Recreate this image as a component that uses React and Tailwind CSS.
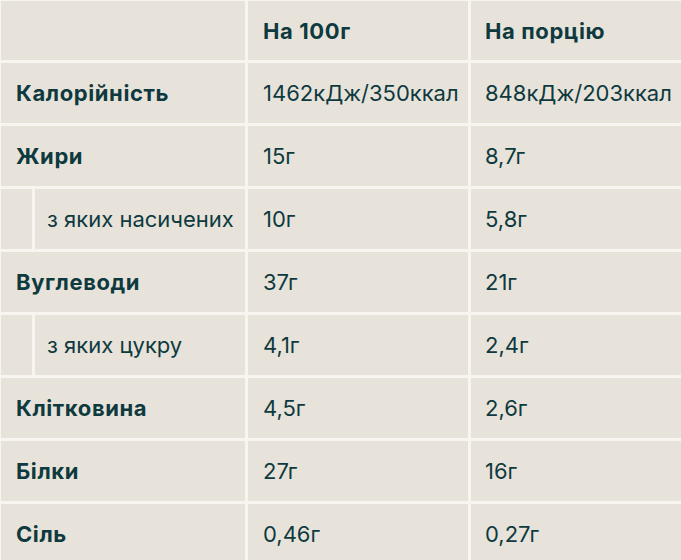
import React from "react";

const rows = [
  { label: "Калорійність", a: "1462кДж/350ккал", b: "848кДж/203ккал" },
  { label: "Жири", a: "15г", b: "8,7г" },
  { label: "з яких насичених", a: "10г", b: "5,8г", sub: true },
  { label: "Вуглеводи", a: "37г", b: "21г" },
  { label: "з яких цукру", a: "4,1г", b: "2,4г", sub: true },
  { label: "Клітковина", a: "4,5г", b: "2,6г" },
  { label: "Білки", a: "27г", b: "16г" },
  { label: "Сіль", a: "0,46г", b: "0,27г" },
];

export default function App() {
  return (
    <div
      className="w-[681px] h-[560px] overflow-hidden bg-[#f8f5f0] pl-[1px] pt-[1px] text-[#0e3a3f]"
      style={{ fontFamily: "Inter, 'Noto Sans', sans-serif" }}
    >
      <div className="grid grid-cols-[244px_220px_230px] gap-[3px] text-[22px] leading-none">
        <div className="h-[59px] bg-[#e8e3da]" />
        <div className="h-[59px] bg-[#e8e3da] flex items-center pl-[15px] font-bold tracking-[0.6px]">На 100г</div>
        <div className="h-[59px] bg-[#e8e3da] flex items-center pl-[14px] font-bold tracking-[0.6px]">На порцію</div>
        {rows.map((r, i) => (
          <React.Fragment key={i}>
            {r.sub ? (
              <div className="h-[60px] flex gap-[3px]">
                <div className="w-[31px] bg-[#e8e3da]" />
                <div className="flex-1 bg-[#e8e3da] flex items-center pl-[12px]">{r.label}</div>
              </div>
            ) : (
              <div className="h-[60px] bg-[#e8e3da] flex items-center pl-[15px] font-bold tracking-[0.6px]">{r.label}</div>
            )}
            <div className="h-[60px] bg-[#e8e3da] flex items-center pl-[15px]">{r.a}</div>
            <div className="h-[60px] bg-[#e8e3da] flex items-center pl-[14px]">{r.b}</div>
          </React.Fragment>
        ))}
      </div>
    </div>
  );
}
